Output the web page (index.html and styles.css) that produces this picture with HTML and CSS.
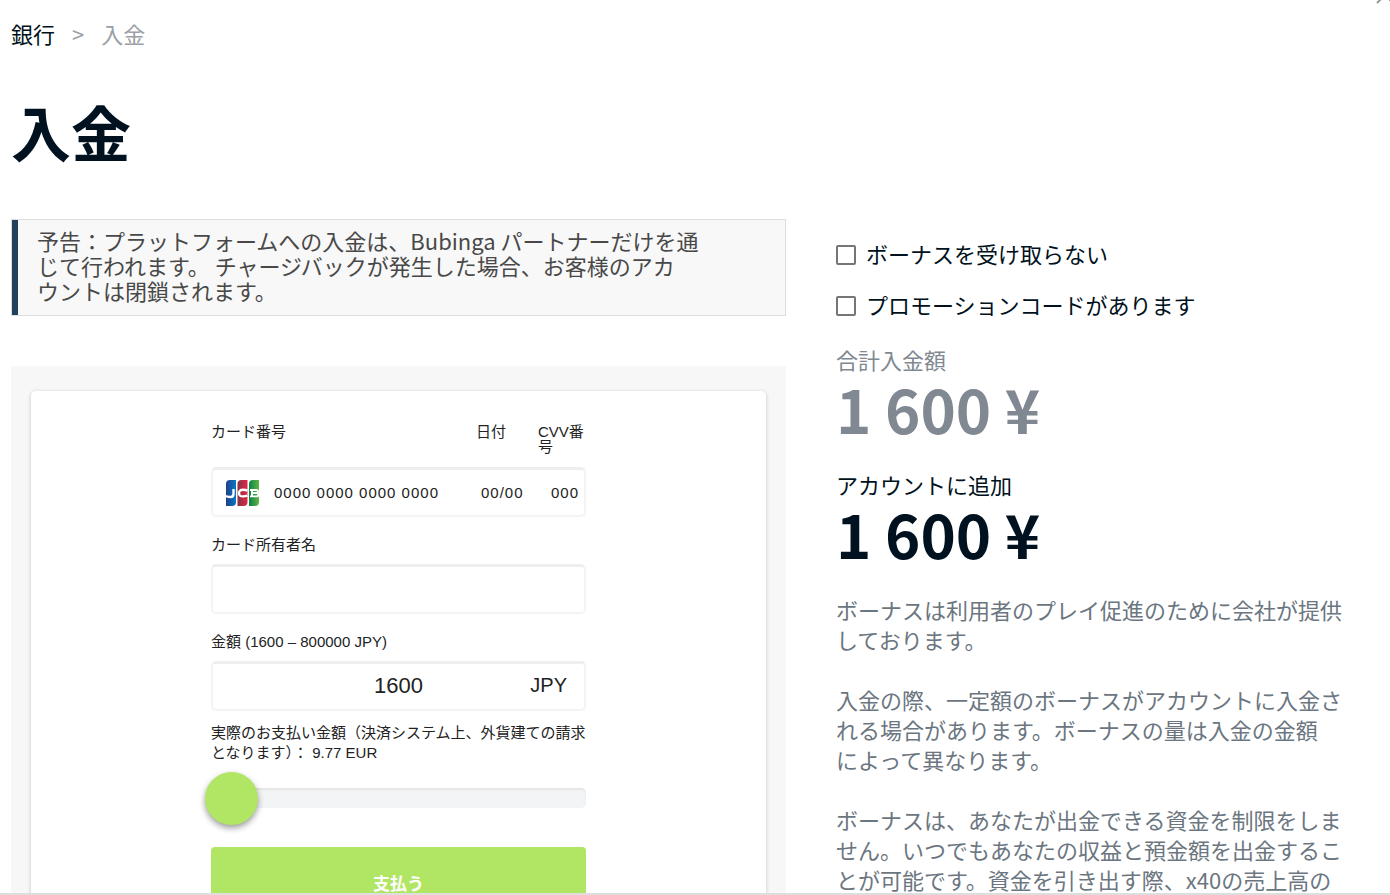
FILE: index.html
```html
<!DOCTYPE html>
<html lang="ja">
<head>
  <meta charset="UTF-8" />
  <meta name="viewport" content="width=device-width, initial-scale=1.0" />
  <title>入金</title>
  <link rel="stylesheet" href="styles.css">
</head>
<body>
  <div class="page">
    <svg class="close-icon" width="18" height="18" viewBox="0 0 18 18" aria-hidden="true">
      <path d="M1 17L17 1M1 1L17 17" />
    </svg>

    <nav class="breadcrumbs">
      <a href="#">銀行</a>
      <span>&gt;</span>
      <span>入金</span>
    </nav>

    <h1>入金</h1>

    <div class="columns">
      <main>
        <p class="notice">予告：プラットフォームへの入金は、Bubinga パートナーだけを通<br>じて行われます。 チャージバックが発生した場合、お客様のアカ<br>ウントは閉鎖されます。</p>

        <div class="panel">
          <div class="card">
            <form class="pay-form">
              <div class="card-labels">
                <label for="number">カード番号</label>
                <label for="date">日付</label>
                <label for="cvv">CVV番号</label>
              </div>
              <div class="field card-field">
                <svg class="jcb" width="34" height="28" viewBox="0 0 34 28" role="img" aria-label="JCB">
                  <defs>
                    <linearGradient id="blue"><stop offset="0" stop-color="#203f8b" /><stop offset="1" stop-color="#0879c4" /></linearGradient>
                    <linearGradient id="red"><stop offset="0" stop-color="#853344" /><stop offset="1" stop-color="#e22649" /></linearGradient>
                    <linearGradient id="green"><stop offset="0" stop-color="#078347" /><stop offset="1" stop-color="#64b444" /></linearGradient>
                  </defs>
                  <path fill="url(#blue)" d="M4 1h6v22q0 4-4 4H0V5q0-4 4-4z" />
                  <path fill="url(#red)" d="M15.500 1h6v22q0 4-4 4h-6V5q0-4 4-4z" />
                  <path fill="url(#green)" d="M27 1h6v22q0 4-4 4h-6V5q0-4 4-4z" />
                  <g fill="none" stroke="#fff" stroke-width="2.400">
                    <path d="M7.500 10v5q0 3-3 3-2.500 0-4.500-1" />
                    <path d="M21.500 11.500q-2-.7-4.500-.7-4 0-4 3.300t4 3.300q2.500 0 4.500-.7" />
                    <path d="M24 11h6q2 0 2 1.500T30 14h-5m0 0h5.500q2 0 2 1.700t-2 1.700H24m2-7v7" stroke-width="1.900" />
                  </g>
                </svg>
                <input class="number" id="number" type="text" placeholder="0000 0000 0000 0000">
                <input class="date" id="date" type="text" placeholder="00/00">
                <input class="cvv" id="cvv" type="text" placeholder="000">
              </div>

              <label class="label" for="holder">カード所有者名</label>
              <input class="field" id="holder" type="text">

              <label class="label" for="amount">金額 (1600 – 800000 JPY)</label>
              <div class="field amount-field">
                <input id="amount" type="text" value="1600">
                <span class="currency">JPY</span>
              </div>

              <p class="actual">実際のお支払い金額（決済システム上、外貨建ての請求となります）： 9.77 EUR</p>
              <input class="slider" type="range" min="1600" max="800000" value="1600" aria-label="金額">
              <button class="pay" type="submit">支払う</button>
            </form>
          </div>
        </div>
      </main>

      <aside>
        <div class="checks">
          <label><input type="checkbox">ボーナスを受け取らない</label>
          <label><input type="checkbox">プロモーションコードがあります</label>
        </div>

        <div class="total muted">
          <p>合計入金額</p>
          <strong>1 600 ¥</strong>
        </div>
        <div class="total">
          <p>アカウントに追加</p>
          <strong>1 600 ¥</strong>
        </div>

        <div class="info">
          <p>ボーナスは利用者のプレイ促進のために会社が提供しております。</p>
          <p>入金の際、一定額のボーナスがアカウントに入金される場合があります。ボーナスの量は入金の金額<br>によって異なります。</p>
          <p>ボーナスは、あなたが出金できる資金を制限をしません。いつでもあなたの収益と預金額を出金することが可能です。資金を引き出す際、x40の売上高の</p>
        </div>
      </aside>
    </div>
  </div>
</body>
</html>
```
FILE: styles.css
```css
:root {
  --dark: #001120;
  --muted: #808891;
  --green: #b0e664;
  --line: #dedede;
}

* { box-sizing: border-box; }

body {
  margin: 0;
  color: var(--dark);
  font-family: "Noto Sans CJK JP", sans-serif;
  font-size: 22px;
  line-height: 30px;
}

p, h1 { margin: 0; }

.page {
  position: relative;
  height: 100vh;
  padding: 18px 32px 0 11px;
  overflow: hidden;
  border-bottom: 2px solid var(--line);
}

.close-icon {
  position: absolute;
  top: -14px;
  right: -4px;
  fill: none;
  stroke: #999;
  stroke-width: 2;
}

.breadcrumbs {
  display: flex;
  gap: 17px;
  color: #9aa0a6;
}

.breadcrumbs a {
  color: var(--dark);
  text-decoration: none;
}

h1 {
  margin: 38px 0 44px;
  font-size: 60px;
  line-height: 89px;
}

.columns {
  display: grid;
  grid-template-columns: minmax(0, 775fr) minmax(0, 522fr);
  gap: 50px;
}

/* left column */
.notice {
  padding: 8px 25px 12px;
  border: 1px solid var(--line);
  background: #f8f8f8;
  box-shadow: inset 6px 0 #22415f;
  color: #484848;
  line-height: 25px;
}

.panel {
  margin-top: 50px;
  padding: 25px 20px;
  background: #f7f7f7;
}

.card {
  padding: 33px 20px;
  border-radius: 5px;
  background: #fff;
  box-shadow: 0 1px 4px rgba(0, 0, 0, 0.2);
}

.pay-form {
  display: flex;
  flex-direction: column;
  max-width: 375px;
  margin: 0 auto;
  color: #222;
  font-family: "Liberation Sans", "Noto Sans CJK JP", sans-serif;
  font-size: 15px;
  line-height: 15px;
}

.pay-form input {
  min-width: 0;
  border: 0;
  padding: 0;
  background: none;
  color: #222;
  font-family: inherit;
  font-size: 15px;
  outline: none;
}

.pay-form input::placeholder {
  color: #222;
  opacity: 1;
}

.card-labels {
  display: grid;
  grid-template-columns: 1fr 62px 48px;
  margin-bottom: 13px;
}

.pay-form .field {
  height: 50px;
  border: 2px solid #f4f4f4;
  border-top: 3px solid #eee;
  border-radius: 5px;
}

.card-field {
  display: flex;
  align-items: center;
  padding-left: 13px;
}

.card-field input { letter-spacing: 1px; }

.number {
  flex: 1;
  margin-left: 14px;
}

.date { width: 70px; }
.cvv { width: 33px; }

.label { margin: 20px 0 12px; }

.amount-field {
  display: grid;
  grid-template-columns: 1fr 60px 1fr;
  align-items: center;
  padding: 0 17px 2px;
}

.pay-form .amount-field input {
  grid-column: 2;
  font-size: 22px;
  text-align: center;
}

.currency {
  justify-self: end;
  font-size: 20px;
}

.actual {
  margin: 12px 0 25px;
  line-height: 20px;
}

.pay-form .slider {
  appearance: none;
  width: 100%;
  height: 20px;
  margin: 0;
  border-radius: 5px;
  background: #f3f4f6;
  box-shadow: inset 0 2px 2px #e4e4e4;
}

.slider::-webkit-slider-thumb {
  appearance: none;
  width: 53px;
  height: 53px;
  margin-left: -6px;
  border-radius: 50%;
  background: var(--green);
  box-shadow: 0 3px 6px rgba(0, 0, 0, 0.4);
}

.pay {
  height: 70px;
  margin-top: 39px;
  border: 0;
  border-radius: 4px;
  background: var(--green);
  color: #fff;
  font-family: inherit;
  font-size: 17px;
  font-weight: bold;
}

/* right column */
aside { padding-top: 19px; }

.checks {
  display: grid;
  gap: 21px;
  margin-bottom: 25px;
}

.checks label {
  display: flex;
  align-items: flex-start;
  gap: 10px;
}

.checks input {
  appearance: none;
  width: 20px;
  height: 20px;
  margin: 7px 0 0;
  border: 2px solid #767676;
  border-radius: 2px;
}

.total { margin-bottom: 28px; }

.total strong {
  display: block;
  font-size: 60px;
  line-height: 67px;
}

.muted { color: var(--muted); }

.info { color: #6b7680; }
.info p { margin-bottom: 30px; }
```
